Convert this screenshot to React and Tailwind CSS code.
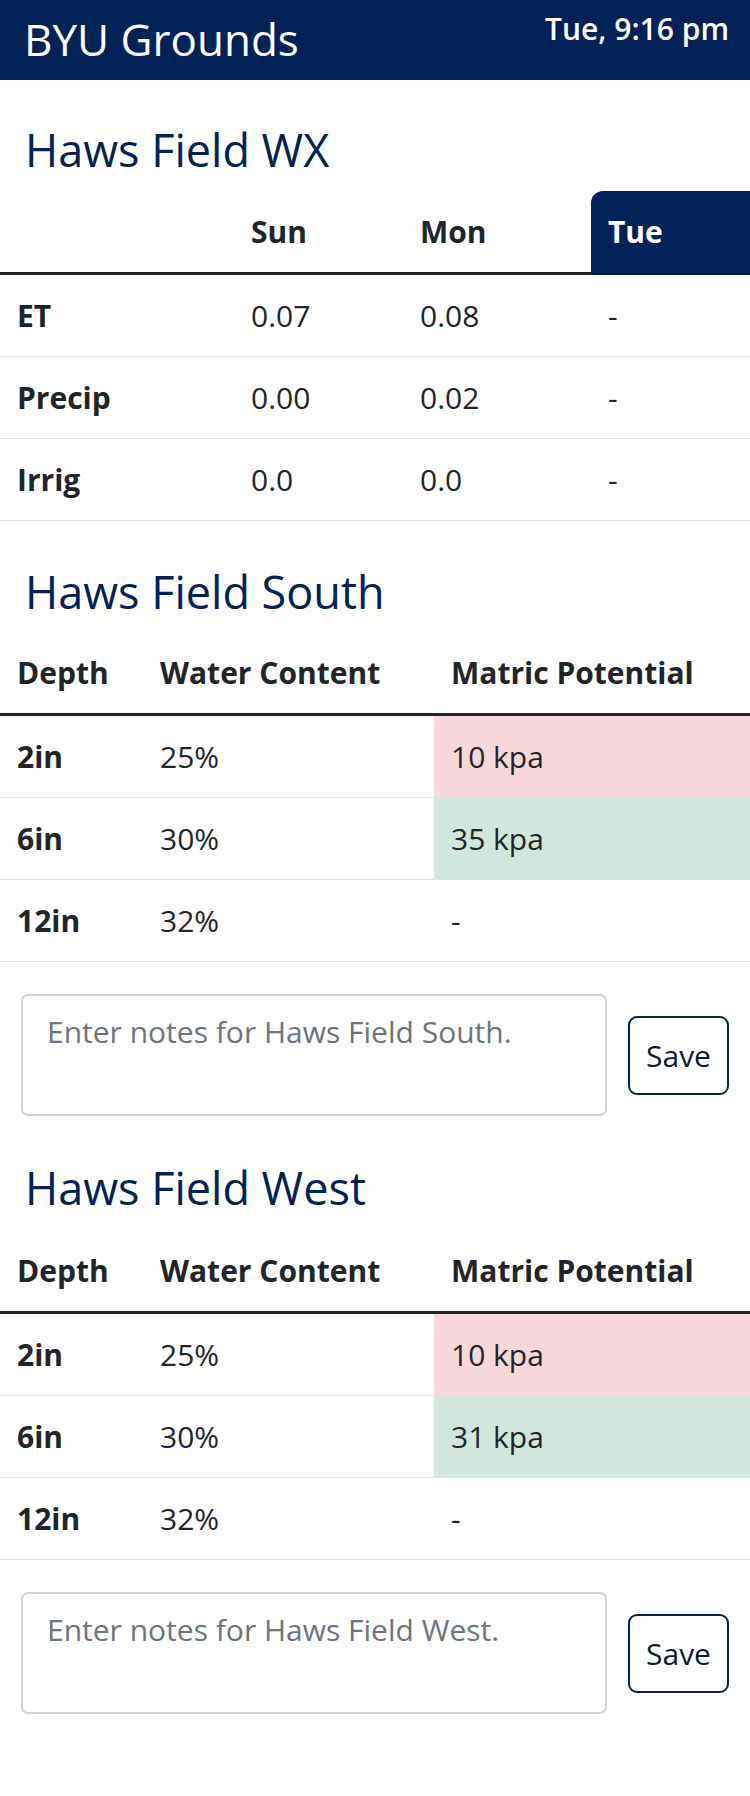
import React from 'react';

const font = { fontFamily: '"Open Sans", "Noto Sans", sans-serif' };

const wxRows = [
  { label: 'ET', sun: '0.07', mon: '0.08', tue: '-' },
  { label: 'Precip', sun: '0.00', mon: '0.02', tue: '-' },
  { label: 'Irrig', sun: '0.0', mon: '0.0', tue: '-' },
];

const Header = () => (
  <div className="h-[80px] bg-[#012256] text-white flex justify-between">
    <div className="pl-[24px] pt-[11px] text-[44px] leading-[56px] font-medium">BYU Grounds</div>
    <div className="pr-[21px] pt-[9px] text-[30px] leading-[40px] font-semibold">Tue, 9:16 pm</div>
  </div>
);

const Heading = ({ children, className = '' }) => (
  <h2 className={`px-[25px] text-[45px] leading-[54px] font-medium text-[#012256] ${className}`}>{children}</h2>
);

const WxTable = () => (
  <table className="w-full table-fixed border-collapse text-[30px] leading-[49px] text-[#212529]">
    <colgroup>
      <col className="w-[234px]" />
      <col className="w-[169px]" />
      <col className="w-[188px]" />
      <col />
    </colgroup>
    <thead>
      <tr>
        <th className="px-[17px] py-[16px] text-left font-bold border-b-[3px] border-[#212529]"></th>
        <th className="px-[17px] py-[16px] text-left font-bold border-b-[3px] border-[#212529]">Sun</th>
        <th className="px-[17px] py-[16px] text-left font-bold border-b-[3px] border-[#212529]">Mon</th>
        <th className="px-[17px] py-[16px] text-left font-bold border-b-[3px] border-[#012256] bg-[#012256] text-white rounded-tl-[12px]">Tue</th>
      </tr>
    </thead>
    <tbody>
      {wxRows.map((r) => (
        <tr key={r.label} className="border-b border-[#dee2e6]">
          <td className="px-[17px] py-[16px] font-bold">{r.label}</td>
          <td className="px-[17px] py-[16px]">{r.sun}</td>
          <td className="px-[17px] py-[16px]">{r.mon}</td>
          <td className="px-[17px] py-[16px]">{r.tue}</td>
        </tr>
      ))}
    </tbody>
  </table>
);

const levelBg = {
  danger: 'bg-[#f8d7da]',
  success: 'bg-[#d1e7dd]',
  none: '',
};

const SoilTable = ({ rows }) => (
  <table className="w-full table-fixed border-collapse text-[30px] leading-[49px] text-[#212529]">
    <colgroup>
      <col className="w-[143px]" />
      <col className="w-[291px]" />
      <col />
    </colgroup>
    <thead>
      <tr className="border-b-[3px] border-[#212529]">
        <th className="px-[17px] py-[16px] text-left font-bold">Depth</th>
        <th className="px-[17px] py-[16px] text-left font-bold">Water Content</th>
        <th className="px-[17px] py-[16px] text-left font-bold">Matric Potential</th>
      </tr>
    </thead>
    <tbody>
      {rows.map((r) => (
        <tr key={r.depth} className="border-b border-[#dee2e6]">
          <td className="px-[17px] py-[16px] font-bold">{r.depth}</td>
          <td className="px-[17px] py-[16px]">{r.water}</td>
          <td className={`px-[17px] py-[16px] ${levelBg[r.level]}`}>{r.matric}</td>
        </tr>
      ))}
    </tbody>
  </table>
);

const Notes = ({ name }) => (
  <div className="flex items-center gap-[21px] px-[21px] mt-[32px]">
    <textarea
      placeholder={`Enter notes for ${name}.`}
      className="flex-1 h-[122px] rounded-[7px] border-2 border-[#ced4da] px-[24px] py-[14px] text-[30px] leading-[44px] text-[#212529] placeholder:text-[#6c757d] resize-none outline-none"
    />
    <button className="w-[101px] h-[79px] rounded-[9px] border-2 border-[#012256] text-[30px] text-[#0b1a3a]">
      Save
    </button>
  </div>
);

const fields = [
  {
    name: 'Haws Field South',
    rows: [
      { depth: '2in', water: '25%', matric: '10 kpa', level: 'danger' },
      { depth: '6in', water: '30%', matric: '35 kpa', level: 'success' },
      { depth: '12in', water: '32%', matric: '-', level: 'none' },
    ],
  },
  {
    name: 'Haws Field West',
    rows: [
      { depth: '2in', water: '25%', matric: '10 kpa', level: 'danger' },
      { depth: '6in', water: '30%', matric: '31 kpa', level: 'success' },
      { depth: '12in', water: '32%', matric: '-', level: 'none' },
    ],
  },
];

export default function App() {
  return (
    <div className="w-[750px] min-h-[1796px] bg-white" style={font}>
      <Header />
      <Heading className="mt-[43px] mb-[14px]">Haws Field WX</Heading>
      <WxTable />
      {fields.map((f, i) => (
        <div key={f.name}>
          <Heading className={i === 0 ? 'mt-[44px] mb-[13px]' : 'mt-[45px] mb-[15px]'}>{f.name}</Heading>
          <SoilTable rows={f.rows} />
          <Notes name={f.name} />
        </div>
      ))}
    </div>
  );
}
